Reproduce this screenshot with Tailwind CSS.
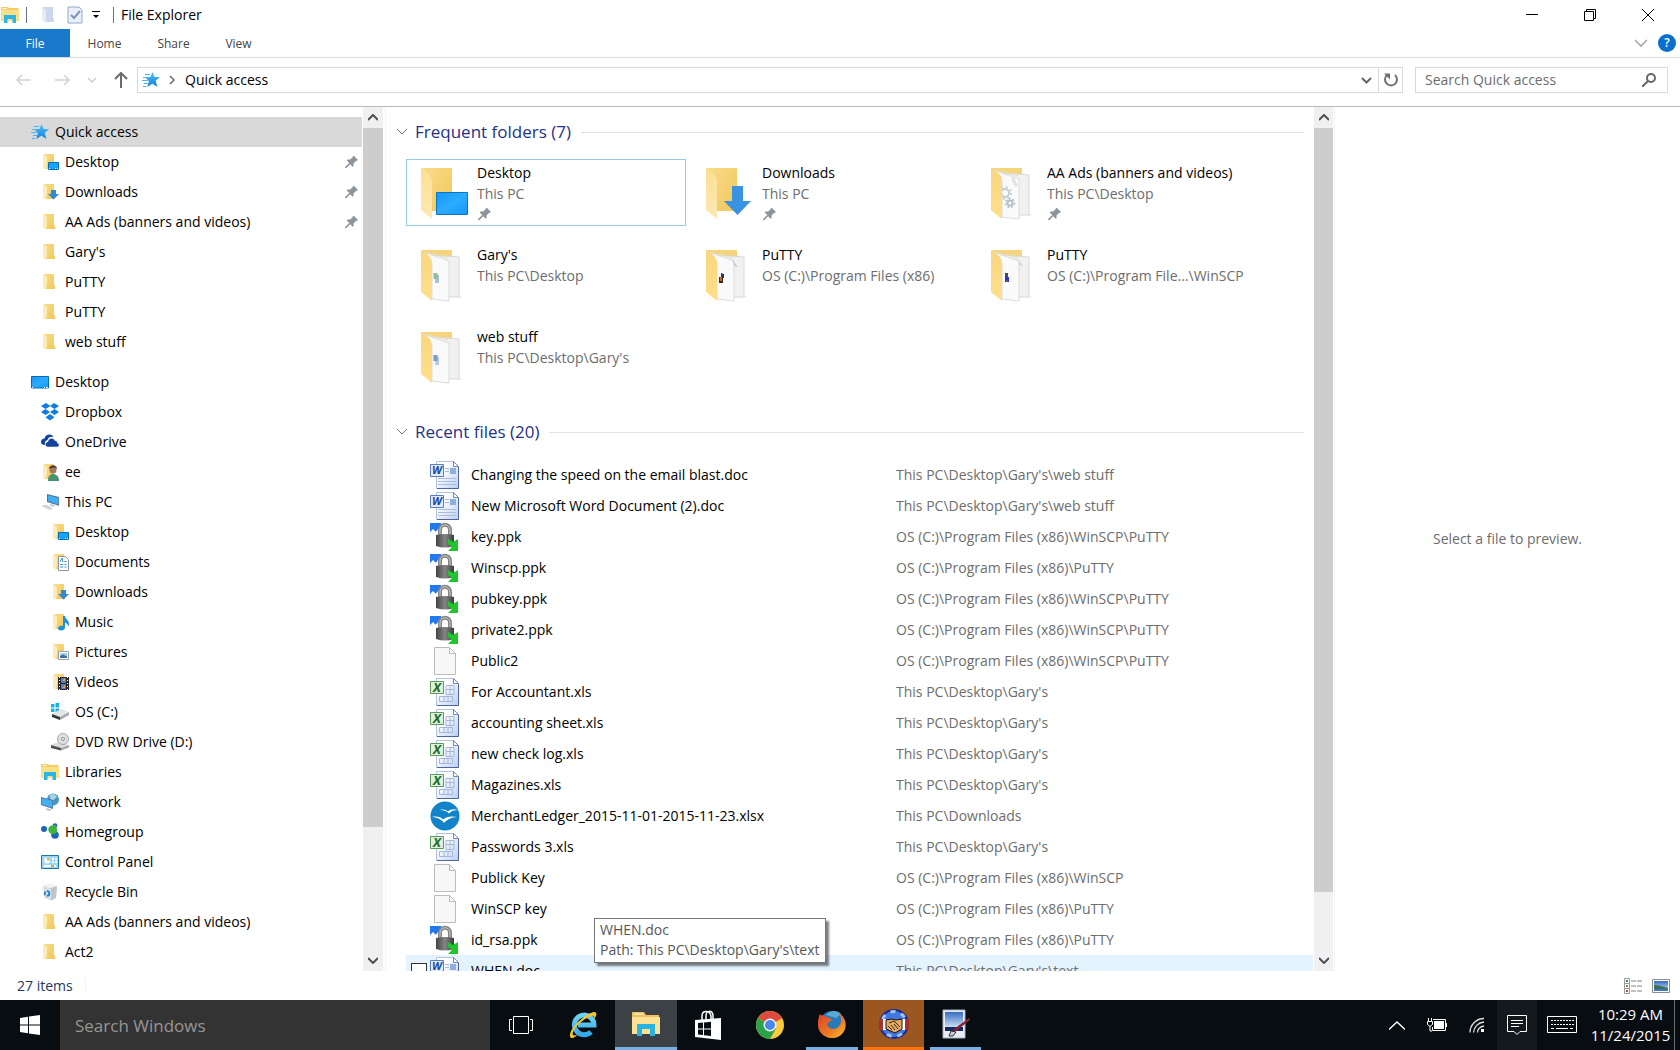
<!DOCTYPE html>
<html lang="en">

<head>
    <meta charset="UTF-8" />
    <meta name="viewport" content="width=device-width, initial-scale=1.0" />
    <title>File Explorer</title>
    <script src="https://cdn.jsdelivr.net/npm/@tailwindcss/browser@4"></script>
</head>

<body class="h-screen flex flex-col overflow-hidden bg-white text-black text-sm font-['Open_Sans','Noto_Sans',sans-serif]">

    <!-- Icon sprite -->
    <svg class="absolute" width="0" height="0" aria-hidden="true">
        <defs>
            <linearGradient id="gFolder" x1="0" y1="0" x2="1" y2="1"><stop offset="0" stop-color="#f9dc8a" /><stop offset="1" stop-color="#f0c75c" /></linearGradient>
            <linearGradient id="gFlap" x1="0" y1="0" x2="0" y2="1"><stop offset="0" stop-color="#fbdf93" /><stop offset="1" stop-color="#fee9b4" /></linearGradient>
            <linearGradient id="gFlapDeep" x1="0" y1="0" x2="0" y2="1"><stop offset="0" stop-color="#f9d67e" /><stop offset="1" stop-color="#ffdf8c" /></linearGradient>
            <linearGradient id="gScreen" x1="0" y1="0" x2="1" y2="1"><stop offset="0" stop-color="#1796f3" /><stop offset="0.5" stop-color="#2cabff" /><stop offset="1" stop-color="#1499fb" /></linearGradient>
            <linearGradient id="gStar" x1="0" y1="0" x2="0" y2="1"><stop offset="0" stop-color="#52c0fb" /><stop offset="1" stop-color="#1181d8" /></linearGradient>
            <linearGradient id="gDoc" x1="0" y1="0" x2="1" y2="1"><stop offset="0.3" stop-color="#fff" /><stop offset="1" stop-color="#bccdf0" /></linearGradient>
            <linearGradient id="gLock" x1="0" y1="0" x2="1" y2="0"><stop offset="0" stop-color="#444" /><stop offset="0.5" stop-color="#858585" /><stop offset="1" stop-color="#3c3c3c" /></linearGradient>
            <linearGradient id="gFox" x1="0" y1="0" x2="1" y2="1"><stop offset="0" stop-color="#d9402a" /><stop offset="0.6" stop-color="#ee7b22" /><stop offset="1" stop-color="#fbc436" /></linearGradient>
            <linearGradient id="gIE" x1="0" y1="0" x2="0" y2="1"><stop offset="0" stop-color="#6fd3f8" /><stop offset="1" stop-color="#35a9e8" /></linearGradient>
            <linearGradient id="gSky" x1="0" y1="0" x2="0" y2="1"><stop offset="0" stop-color="#356cc4" /><stop offset="1" stop-color="#d5e7f8" /></linearGradient>
        </defs>

        <symbol id="star" viewBox="0 0 18 18">
            <path d="M10.5 1l2 5 5.500.3-4.300 3.500 1.600 6-5-3-5 3.200 1.600-6L3 6.300l5.500-.3z" fill="url(#gStar)" />
            <path d="M3 3.500h5M1 6.500h4M0 9.500h6M2 12.500h4M1 15.500h3" stroke="#4eb4f3" />
        </symbol>
        <symbol id="folder" viewBox="0 0 18 18">
            <path d="M3 1h10v11l1 1v3H5z" fill="url(#gFolder)" />
            <path d="M2 1l4 3v7l-1 6-3-2z" fill="#fdebb8" />
        </symbol>
        <symbol id="folder-desktop" viewBox="0 0 18 18">
            <use href="#folder" />
            <path d="M7.5 9.5h10v7h-10z" fill="#18a3fb" stroke="#0a6ab3" />
            <path d="M8 15.500h1M14 15.500h1M16 15.500h1" stroke="#fff" />
        </symbol>
        <symbol id="folder-down" viewBox="0 0 18 18">
            <use href="#folder" />
            <path d="M10 7h5v4h3l-5.500 5.500L7 11h3z" fill="#3389d8" />
        </symbol>
        <symbol id="folder-docs" viewBox="0 0 18 18">
            <use href="#folder" />
            <path d="M7.5 3.5h7l3 3v11h-10z" fill="#fff" stroke="#8b959b" />
            <path d="M9 9l2-4 1 4M9 11.500h3M9 14h3M13.500 8.500h2M13.500 11.500h2M13.500 14h2" fill="none" stroke="#2f91c9" />
        </symbol>
        <symbol id="folder-music" viewBox="0 0 18 18">
            <use href="#folder" />
            <path d="M12 3h2c0 3 4 4 4 8 0 1-.5 2-1 2.500C17 11 15.500 10 14 9.500V14c0 2-1.500 3.500-4 3.500-2 0-3-1-3-2.200 0-2 2.500-3 5-2.300z" fill="#1b8fdb" />
        </symbol>
        <symbol id="folder-pics" viewBox="0 0 18 18">
            <use href="#folder" />
            <path d="M7.5 8.500h10v8h-10z" fill="#fff" stroke="#98a1a8" />
            <path d="M9 10h7v5H9z" fill="#a8cdea" />
            <path d="M9 13l3-1.500 4 2V15H9z" fill="#396f9e" />
        </symbol>
        <symbol id="folder-video" viewBox="0 0 18 18">
            <use href="#folder" />
            <path d="M7 4h11v13H7z" fill="#24282e" />
            <path d="M10 5h5v5h-5zM10 11h5v5h-5z" fill="#5578bf" />
            <path d="M11 8l3-3v3zM11 15l3-3v3z" fill="#d8ab49" />
            <path d="M8.500 4v13M16.500 4v13" stroke="#fff" stroke-dasharray="1 2" />
        </symbol>
        <symbol id="folder-user" viewBox="0 0 18 18">
            <use href="#folder" />
            <path d="M7 18c0-5 2-7 5-7s6 2 6 7z" fill="#489271" />
            <circle cx="12" cy="7" r="3.500" fill="#a57a59" />
            <path d="M8 6c0-5 8-5 8 0l-2-1.500-4 .5z" fill="#51392c" />
        </symbol>
        <symbol id="desktop" viewBox="0 0 18 18">
            <path d="M.5 3.500h17v11.500H.5z" fill="url(#gScreen)" stroke="#086ab3" />
            <path d="M1 14.500h1M13 14.500h1M15 14.500h2" stroke="#fff" />
        </symbol>
        <symbol id="dropbox" viewBox="0 0 18 18">
            <path d="M5 0l4.500 3L4.500 6 0 3zM13 0l5 3-4.500 3-4.500-3zM4.500 6L9 9l-4.500 3L0 9zM13.500 6L18 9l-4.500 3L9 9zM9 11l4.500 3.200L9 17.500l-4.500-3.300z" fill="#0e7ce0" />
        </symbol>
        <symbol id="onedrive" viewBox="0 0 18 18">
            <path d="M4 12c-2.500 0-4-1-4-3s1.500-3.500 3.500-3.500C4 3 6 1.500 8.500 1.500c2 0 3.500 1 4 2.500-3-.8-5.500.5-6 3C4 7.500 3.500 10 4 12z" fill="#14439c" />
            <path d="M7 14c-3.500 0-3.500-5 0-5.300.3-4 5.600-4.700 6.800-1.200 2-.3 2.700 1.200 2.500 2.500 2.500.3 2.200 4 0 4z" fill="#14439c" stroke="#fff" stroke-width=".5" />
        </symbol>
        <symbol id="pc" viewBox="0 0 18 18">
            <path d="M6 1l12.500 3v9L6 9z" fill="#5a7084" />
            <path d="M7 2.300L17.500 5v6.500L7 8.200z" fill="#43adf4" />
            <path d="M9 11l5 1-1 2-4-1z" fill="#c5cacd" />
            <path d="M0 13l5-1.500 7 4L9 17z" fill="#d0d4d7" />
        </symbol>
        <symbol id="drive" viewBox="0 0 18 18">
            <path d="M0 1h3.500v3.500H0zM4.500 0H8v4.500H4.500zM0 5.500h3.500V9H0zM4.500 5.500H8v4H4.500z" fill="#1db1de" />
            <path d="M1 11l9-5 8 3-9 5z" fill="#e3e5e6" />
            <path d="M1 11l8 3v3l-8-3z" fill="#35393b" />
            <path d="M9 14l9-5v3l-9 5z" fill="#a5a9ab" />
        </symbol>
        <symbol id="dvd" viewBox="0 0 18 18">
            <path d="M0 12l7-3 11 3-8 3z" fill="#dadcdd" />
            <path d="M0 12l10 3v2.500L0 15z" fill="#4b4e50" />
            <path d="M10 15l8-3v2.500l-8 3z" fill="#a5a8aa" />
            <circle cx="12" cy="6" r="5.500" fill="#dde0e3" stroke="#a6a9ab" />
            <circle cx="12" cy="6" r="1.500" fill="#fff" stroke="#8d9194" />
        </symbol>
        <symbol id="libraries" viewBox="0 0 18 18">
            <path d="M0 2V1h7l1 1h9.500v13H0z" fill="#f3cb61" />
            <path d="M0 4h18v11H0z" fill="#fddf86" />
            <path d="M1 2.500h5" stroke="#fff6d2" />
            <path d="M3 17V9h12v8h-3.500v-4h-5v4z" fill="#2ab8e2" />
        </symbol>
        <symbol id="network" viewBox="0 0 18 18">
            <circle cx="12" cy="6.500" r="6" fill="#4c93bd" />
            <path d="M9 2c2-2 6-1 7 2-2 1-3 4-5 3S8 4 9 2z" fill="#a6d3e8" />
            <path d="M0 4l12 3v9L0 12z" fill="#4b7ba0" />
            <path d="M.8 5l10.400 2.700v7L.8 11.300z" fill="#44aef2" />
            <path d="M5 15l6 1.500-2 1.500-4-1z" fill="#c0c7cc" />
        </symbol>
        <symbol id="homegroup" viewBox="0 0 18 18">
            <circle cx="3" cy="6" r="3" fill="#1b65b8" />
            <circle cx="14" cy="2.500" r="2.300" fill="#1b65b8" />
            <circle cx="14" cy="12" r="3.800" fill="#1b65b8" />
            <path d="M8 4c2-2 7-3 7-1 1 3 2 6 0 7-2 2-6 1-7-1s-1-3 0-5z" fill="#3fb53f" />
        </symbol>
        <symbol id="control" viewBox="0 0 18 18">
            <path d="M.5 2.500h17v13H.5z" fill="#9bd7f7" stroke="#2077ae" />
            <circle cx="6" cy="7.500" r="3" fill="#f7fcff" />
            <path d="M6 7.500V4.500a3 3 0 0 1 3 3z" fill="#ecb544" />
            <path d="M11 5h2v2h-2zM14 5h2v2h-2zM11 8h2v2h-2zM14 8h2v2h-2z" fill="#fff" />
            <path d="M3 13h12" stroke="#fff" stroke-width="2" />
            <path d="M10 13h3" stroke="#e9a12e" stroke-width="2" />
        </symbol>
        <symbol id="bin" viewBox="0 0 18 18">
            <path d="M2 3l6-2 8 2-1 12-5 2.500L3.500 15z" fill="#d9dee2" />
            <path d="M2 3l8 2 6-2-6-2z" fill="#f2f4f5" />
            <path d="M10 5l6-2-1 12-5 2.500z" fill="#bfc5ca" />
            <circle cx="6" cy="10.500" r="2.300" fill="none" stroke="#1d7ed0" stroke-width="1.800" stroke-dasharray="3.500 1.300" />
        </symbol>
        <symbol id="pin" viewBox="0 0 14 14">
            <path d="M9 1l4 4-.8.800-1-.1-2.700 2.700.1 2.500-.9.900-2.600-2.600L1.500 13 0 13.200l.3-1.500 4-3.800-2.600-2.500.9-1 2.500.200 2.800-2.700-.1-1z" fill="#8d959c" />
        </symbol>

        <!-- Tile icons -->
        <symbol id="big-folder" viewBox="0 0 48 52">
            <path d="M0 0h31v43H11z" fill="url(#gFolder)" />
            <path d="M0 0l8 6q3 3 3 8v37L0 42z" fill="url(#gFlap)" />
        </symbol>
        <symbol id="big-desktop" viewBox="0 0 48 52">
            <use href="#big-folder" />
            <path d="M15.500 24.500h31v22h-31z" fill="url(#gScreen)" stroke="#0c75c4" />
        </symbol>
        <symbol id="big-down" viewBox="0 0 48 52">
            <use href="#big-folder" />
            <path d="M26 18h11v15h8L31.500 47 18 33h8z" fill="#3a92e2" />
        </symbol>
        <symbol id="big-pages" viewBox="0 0 48 52">
            <path d="M0 0h31v7L11 9z" fill="#f6d47c" />
            <path d="M12 5l26 2v40H12z" fill="#f1f1f1" stroke="#d8d8d8" />
            <path d="M37 47l4-1-3 2z" fill="#ddd" />
            <path d="M5 3l23 8v40l-17-2V13z" fill="#fafafa" stroke="#dcdcdc" />
            <path d="M3 2l24 6" stroke="#e5dfc8" />
            <path d="M0 0l8 6q3 3 3 8v37L0 42z" fill="url(#gFlapDeep)" />
        </symbol>
        <symbol id="big-gears" viewBox="0 0 48 52">
            <use href="#big-pages" />
            <path d="M20 10l4 9 3-1-4-8z" fill="#e2e2dc" />
            <circle cx="14" cy="25" r="4" fill="none" stroke="#c3cdd5" stroke-width="2" />
            <circle cx="14" cy="25" r="6" fill="none" stroke="#c3cdd5" stroke-width="2" stroke-dasharray="2 2.700" />
            <circle cx="19" cy="35" r="2.500" fill="none" stroke="#b5c0cb" stroke-width="2" />
            <circle cx="19" cy="35" r="4.300" fill="none" stroke="#b5c0cb" stroke-width="2" stroke-dasharray="1.700 2" />
            <path d="M11 14v37L0 42V0l8 6q3 3 3 8z" fill="url(#gFlapDeep)" />
        </symbol>
        <symbol id="big-xls" viewBox="0 0 48 52">
            <use href="#big-pages" />
            <path d="M14 25h4v8h-4z" fill="#a8bfe0" />
            <path d="M12.500 23h4v6h-4z" fill="#8fbd94" />
        </symbol>
        <symbol id="big-doc" viewBox="0 0 48 52">
            <use href="#big-pages" />
            <path d="M14 25h4v8h-4z" fill="#b5c9e8" />
            <path d="M12.500 23h4v6h-4z" fill="#7c9ac9" />
        </symbol>
        <symbol id="big-putty" viewBox="0 0 48 52">
            <use href="#big-pages" />
            <path d="M26 9l6 8-4-1z" fill="#cfcfcf" />
            <path d="M15 23l3 1v4h-3z" fill="#2a2f8f" />
            <path d="M13 27h4v6h-4z" fill="#3a2a12" />
            <path d="M14 27h2v4h-2z" fill="#c1682a" />
        </symbol>
        <symbol id="big-putty2" viewBox="0 0 48 52">
            <use href="#big-pages" />
            <path d="M27 9l5 7-4-1z" fill="#d5d5d5" />
            <path d="M14 23h3v4h-3z" fill="#4a4a5a" />
            <path d="M14 27h4v5h-4z" fill="#2a35d0" />
            <path d="M15 30h2v2h-2z" fill="#5b5b5b" />
        </symbol>

        <!-- File icons, the letter on doc and xls is added per row -->
        <symbol id="doc" viewBox="0 0 30 30">
            <path d="M6.500 1.500h17l5 5v22h-22z" fill="url(#gDoc)" stroke="#b3c2e0" />
            <path d="M28.500 7v21.500H7" fill="none" stroke="#4c679d" />
            <path d="M23.500 1.500v5h5z" fill="#fff" stroke="#7287b3" />
            <path d="M15 8.500h4M15 11.500h4M8 18.500h18M8 21.500h18M8 24.500h18" stroke="#a9bbdf" />
            <path d="M20 8h6v6h-6z" fill="#8faee0" />
            <path d="M.5 4.500h13v12H.5z" fill="#e3ebfa" stroke="#5b7dbf" />
        </symbol>
        <symbol id="xls" viewBox="0 0 30 30">
            <path d="M6.500 1.500h17l5 5v22h-22z" fill="url(#gDoc)" stroke="#b3c2e0" />
            <path d="M28.500 7v21.500H7" fill="none" stroke="#4c679d" />
            <path d="M23.500 1.500v5h5z" fill="#fff" stroke="#7287b3" />
            <path d="M16 8.500h8v9h-8zM20 8v10M16 12.500h8M9.500 19.500h13v5h-13zM14 20v5M18 20v5" fill="none" stroke="#a3b7dd" />
            <path d="M.5 4.500h13v12H.5z" fill="#dff0dc" stroke="#5a9a5c" />
        </symbol>
        <symbol id="ppk" viewBox="0 0 30 30">
            <path d="M0 1h11v4L8 7l-4 5-4-2z" fill="#2179f0" />
            <path d="M0 10l3-3 4 4-2 2z" fill="#fff" />
            <path d="M10 15V8c0-7 10-7 10 0v7" fill="none" stroke="#858585" stroke-width="4" />
            <path d="M10 15V8c0-7 10-7 10 0v7" fill="none" stroke="#c9c9c9" />
            <path d="M6 13q9-2 18 0v11q-9 3-18 0z" fill="url(#gLock)" />
            <path d="M18 17l5 3 5-3v12H18l4-4-4-3z" fill="#1fc62b" />
        </symbol>
        <symbol id="blank" viewBox="0 0 30 30">
            <path d="M4.500 1.500h15l6 6v21h-21z" fill="#f7f7f7" stroke="#bcbcbc" />
            <path d="M19.500 1.500v6h6z" fill="#fff" stroke="#bcbcbc" />
        </symbol>
        <symbol id="office" viewBox="0 0 30 30">
            <circle cx="15" cy="15" r="14.500" fill="#1283c9" />
            <path d="M10 9c4-1 6 0 8 1.500 2-2 6-3 10-1.500-4 0-7 1-9 3.500-2-2-5-3.500-9-3.500zM2 16c5-1 9 0 11 2.500 3-2.500 8-4 14-2.500-6 .5-9 2-13 6-2-3-6-5.500-12-6z" fill="#fff" />
        </symbol>
    </svg>

    <!-- Title bar -->
    <header class="h-[29px] shrink-0 flex items-center">
        <svg class="size-[18px] ml-px" aria-hidden="true"><use href="#libraries" /></svg>
        <span class="w-px h-4 bg-gray-500 ml-[7px]"></span>
        <svg class="size-[18px] ml-[13px]" viewBox="0 0 18 18" aria-hidden="true">
            <path d="M3 1h10v11l1 1v3H5z" fill="#ccd8ea" />
            <path d="M2 1l4 3v13l-4-3z" fill="#e3ebf5" />
        </svg>
        <svg class="size-[18px] ml-2" viewBox="0 0 18 18" aria-hidden="true">
            <path d="M2 1h11l3 3v13H2z" fill="#e9f0fa" stroke="#94a6c6" />
            <path d="M5 9l3 3 6-7" fill="none" stroke="#8093b8" stroke-width="2" />
        </svg>
        <button class="w-6 h-5 flex items-center justify-center" aria-label="Customize Quick Access Toolbar">
            <svg class="size-2" viewBox="0 0 8 8"><path d="M0 0h8v1H0zM1 4h6L4 7z" /></svg>
        </button>
        <span class="w-px h-4 bg-gray-500 ml-[5px]"></span>
        <h1 class="ml-[7px]">File Explorer</h1>
        <div class="ml-auto mr-[3px] flex h-full">
            <button class="w-[58px] flex items-center justify-center" aria-label="Minimize">
                <svg class="size-3" viewBox="0 0 12 12"><path d="M0 5.500h12" stroke="#000" /></svg>
            </button>
            <button class="w-[58px] flex items-center justify-center" aria-label="Restore">
                <svg class="size-3" viewBox="0 0 12 12"><path d="M.5 2.500h9v9h-9zM2.500 2V.5h9v9H10" fill="none" stroke="#000" /></svg>
            </button>
            <button class="w-[58px] flex items-center justify-center" aria-label="Close">
                <svg class="size-3" viewBox="0 0 12 12"><path d="M0 0l12 12M12 0L0 12" stroke="#000" /></svg>
            </button>
        </div>
    </header>

    <!-- Ribbon tabs -->
    <nav class="h-[29px] shrink-0 flex items-stretch border-b border-[#dadbdc] text-xs text-[#444]">
        <button class="w-[70px] pt-[2px] bg-[#1979ca] text-white">File</button>
        <button class="w-[69px] pt-[2px]">Home</button>
        <button class="w-[69px] pt-[2px]">Share</button>
        <button class="w-[61px] pt-[2px]">View</button>
        <div class="ml-auto mr-1 flex items-center gap-[11px]">
            <button aria-label="Expand the Ribbon">
                <svg class="w-3 h-2" viewBox="0 0 12 8"><path d="M0 1l6 6 6-6" fill="none" stroke="#a0a0a0" stroke-width="1.500" /></svg>
            </button>
            <button class="size-[18px] rounded-full bg-[#0b6fcd] text-white font-semibold leading-[18px]" aria-label="Help">?</button>
        </div>
    </nav>

    <!-- Address row -->
    <div class="h-[49px] shrink-0 flex items-center pl-4 pr-3 pb-1 border-b border-[#b9b9b9]">
        <button aria-label="Back">
            <svg class="w-[15px] h-3" viewBox="0 0 15 12"><path d="M15 6H1M6 1L1 6l5 5" fill="none" stroke="#d2d2d2" stroke-width="1.500" /></svg>
        </button>
        <button class="ml-6" aria-label="Forward">
            <svg class="w-[15px] h-3" viewBox="0 0 15 12"><path d="M0 6h14M9 1l5 5-5 5" fill="none" stroke="#d2d2d2" stroke-width="1.500" /></svg>
        </button>
        <button class="ml-[18px]" aria-label="Recent locations">
            <svg class="w-2 h-[6px]" viewBox="0 0 8 6"><path d="M0 1l4 4 4-4" fill="none" stroke="#ccc" stroke-width="1.500" /></svg>
        </button>
        <button class="ml-[18px]" aria-label="Up">
            <svg class="w-[14px] h-4" viewBox="0 0 14 16"><path d="M7 16V1M1 7l6-6 6 6" fill="none" stroke="#6a6a6a" stroke-width="2" /></svg>
        </button>
        <div class="flex-1 h-[26px] ml-[9px] flex items-center border border-[#d9d9d9]">
            <svg class="size-[18px] ml-1" aria-hidden="true"><use href="#star" /></svg>
            <svg class="w-[6px] h-[10px] ml-[9px]" viewBox="0 0 6 10" aria-hidden="true"><path d="M1 1l4 4-4 4" fill="none" stroke="#666" stroke-width="1.500" /></svg>
            <a href="#" class="ml-[10px]">Quick access</a>
            <button class="ml-auto w-6 h-full flex items-center justify-center" aria-label="Previous locations">
                <svg class="w-[11px] h-[7px]" viewBox="0 0 11 7"><path d="M1 1l4.500 4.500L10 1" fill="none" stroke="#666" stroke-width="2" /></svg>
            </button>
            <button class="w-6 h-full flex items-center justify-center border-l border-[#d9d9d9]" aria-label="Refresh">
                <svg class="size-4" viewBox="0 0 16 16"><path d="M12 3a6 6 0 1 1-8 0" fill="none" stroke="#6f6f6f" stroke-width="2" /><path d="M1 1.500h6v6z" fill="#6f6f6f" /></svg>
            </button>
        </div>
        <label class="w-[253px] h-[26px] ml-3 flex items-center border border-[#d9d9d9] pl-[9px] pr-[11px]">
            <input type="text" placeholder="Search Quick access" aria-label="Search Quick access" class="flex-1 min-w-0 outline-none placeholder:text-[#6d6d6d]" />
            <svg class="size-[14px]" viewBox="0 0 14 14" aria-hidden="true"><circle cx="9" cy="5" r="4" fill="none" stroke="#666" stroke-width="2" /><path d="M6 8l-6 6" stroke="#666" stroke-width="2" /></svg>
        </label>
    </div>

    <div class="flex-1 min-h-0 flex">
        <!-- Navigation pane -->
        <aside class="w-[386px] shrink-0 flex border-r border-[#f3f3f3]">
            <nav id="tree" class="flex-1 pt-[10px] mr-px overflow-hidden"></nav>
            <div class="w-5 mr-[2px] flex flex-col bg-[#f0f0f0]">
                <button class="h-[21px] flex items-center justify-center" aria-label="Scroll up">
                    <svg class="w-[10px] h-[7px]" viewBox="0 0 10 7"><path d="M0 6l5-5 5 5" fill="none" stroke="#505050" stroke-width="2" /></svg>
                </button>
                <div class="flex-1"><div class="h-[85%] bg-[#cdcdcd]"></div></div>
                <button class="h-[21px] flex items-center justify-center" aria-label="Scroll down">
                    <svg class="w-[10px] h-[7px]" viewBox="0 0 10 7"><path d="M0 1l5 5 5-5" fill="none" stroke="#505050" stroke-width="2" /></svg>
                </button>
            </div>
        </aside>

        <!-- File list -->
        <main class="relative flex-1 min-w-0 flex">
            <div class="flex-1 min-w-0 pt-[10px] pl-[11px] overflow-hidden">
                <section>
                    <h2 class="h-[30px] mr-[9px] flex items-center text-[17px] text-[#1e3287]">
                        <svg class="w-[10px] h-[6px] mr-2" viewBox="0 0 10 6" aria-hidden="true"><path d="M0 0l5 5 5-5" fill="none" stroke="#777" /></svg>
                        Frequent folders (7)
                        <span class="flex-1 h-px ml-[10px] bg-[#e2e2e2]"></span>
                    </h2>
                    <div id="folders" class="mt-3 ml-[9px] flex flex-wrap gap-x-[5px] gap-y-[15px]"></div>
                </section>
                <section class="mt-[27px]">
                    <h2 class="h-[30px] mr-[9px] flex items-center text-[17px] text-[#1e3287]">
                        <svg class="w-[10px] h-[6px] mr-2" viewBox="0 0 10 6" aria-hidden="true"><path d="M0 0l5 5 5-5" fill="none" stroke="#777" /></svg>
                        Recent files (20)
                        <span class="flex-1 h-px ml-[10px] bg-[#e2e2e2]"></span>
                    </h2>
                    <div class="mt-3 ml-[9px]">
                        <table class="w-full table-fixed border-collapse">
                            <colgroup><col class="w-6" /><col class="w-[41px]" /><col class="w-[425px]" /><col /></colgroup>
                            <tbody id="files"></tbody>
                        </table>
                    </div>
                </section>
            </div>
            <div class="w-[19px] ml-px mr-[1px] flex flex-col bg-[#f0f0f0]">
                <button class="h-[21px] flex items-center justify-center" aria-label="Scroll up">
                    <svg class="w-[10px] h-[7px]" viewBox="0 0 10 7"><path d="M0 6l5-5 5 5" fill="none" stroke="#505050" stroke-width="2" /></svg>
                </button>
                <div class="flex-1"><div class="h-[93%] bg-[#cdcdcd]"></div></div>
                <button class="h-[21px] flex items-center justify-center" aria-label="Scroll down">
                    <svg class="w-[10px] h-[7px]" viewBox="0 0 10 7"><path d="M0 1l5 5 5-5" fill="none" stroke="#505050" stroke-width="2" /></svg>
                </button>
            </div>
            <div role="tooltip" class="absolute left-[208px] bottom-2 px-[5px] pt-px pb-[2px] border border-[#767676] bg-white text-[#575757] leading-5 whitespace-nowrap shadow-[3px_3px_2px_#00000080]">
                WHEN.doc<br />Path: This PC\Desktop\Gary's\text
            </div>
        </main>

        <!-- Preview pane -->
        <section class="w-[346px] shrink-0 flex items-center justify-center border-l border-[#f3f3f3] text-[#6d6d6d]">
            <p>Select a file to preview.</p>
        </section>
    </div>

    <!-- Status bar -->
    <footer class="h-[29px] shrink-0 flex items-center pl-[17px] pr-[10px] text-[#1e395b]">
        <span>27 items</span>
        <span class="w-px h-4 ml-3 bg-gray-100"></span>
        <button class="ml-auto" aria-label="Details view">
            <svg class="w-[19px] h-4" viewBox="0 0 19 16">
                <path d="M.5.500h5v5h-5zM.5 5.500h5v5h-5zM.5 10.500h5v5h-5z" fill="#fff" stroke="#999" />
                <path d="M2 2h2v2H2z" fill="#3477b6" /><path d="M2 7h2v2H2z" fill="#7a8b55" /><path d="M2 12h2v2H2z" fill="#b04b2c" />
                <path d="M7 3h5M13 3h5M7 8h5M13 8h5M7 13h5M13 13h5" stroke="#808080" />
            </svg>
        </button>
        <button class="ml-[9px]" aria-label="Large icons view">
            <svg class="w-[18px] h-[14px]" viewBox="0 0 18 14">
                <path d="M.5.500h17v13H.5z" fill="#fff" stroke="#8c8c8c" />
                <path d="M2 2h14v10H2z" fill="url(#gSky)" />
                <path d="M2 6c4 0 8 1 14 3v1H2z" fill="#3d7157" /><path d="M2 10h14v2H2z" fill="#3f78bd" />
            </svg>
        </button>
    </footer>

    <!-- Taskbar -->
    <div class="h-[50px] shrink-0 flex bg-[#070d11] text-white">
        <button class="w-[60px] flex items-center justify-center" aria-label="Start">
            <svg class="size-5" viewBox="0 0 20 20"><path d="M0 3l8-1.200V9.500H0zM9 1.600L20 0v9.500H9zM0 10.500h8v7.700L0 17zM9 10.500h11V20L9 18.400z" fill="#fff" /></svg>
        </button>
        <input type="text" placeholder="Search Windows" aria-label="Search Windows" class="w-[430px] bg-[#333] px-[15px] pt-[2px] text-[17px] outline-none placeholder:text-[#969696]" />
        <button class="w-[61px] flex items-center justify-center" aria-label="Task View">
            <svg class="w-6 h-[18px]" viewBox="0 0 24 18"><path d="M4.500.5h15v17h-15zM3 3.500H.5v11H3M21 3.500h2.500v11H21" fill="none" stroke="#fff" /></svg>
        </button>
        <button class="w-16 flex items-center justify-center" aria-label="Internet Explorer">
            <svg class="size-7" viewBox="0 0 28 28">
                <path d="M22 21a9.800 9.800 0 1 1 3-7H9" fill="none" stroke="url(#gIE)" stroke-width="5" />
                <path d="M4 27C-1 28 0 20 8 12S26-1 27 2c1 1 0 4-2 6 1-4-2-4-7-1C10 11 2 21 4 24c1 1 3 0 5-1-2 2-3 3-5 4z" fill="#f4c531" />
            </svg>
        </button>
        <button class="w-[62px] flex items-center justify-center bg-[#3b4144] border-b-3 border-[#76b0e4]" aria-label="File Explorer">
            <svg class="w-7 h-6" viewBox="0 0 28 24">
                <path d="M0 0h12l2 3h13v18H0z" fill="#eec15c" /><path d="M0 5h28v17H0z" fill="#fde196" />
                <path d="M2 2h9" stroke="#fff" /><path d="M5 24V12h18v12h-5v-7h-8v7z" fill="#28b3e3" />
            </svg>
        </button>
        <button class="w-[62px] flex items-center justify-center" aria-label="Store">
            <svg class="w-[26px] h-[30px]" viewBox="0 0 26 30">
                <path d="M7 11V6c0-6 8-6 9 0v3M11 10V6c0-6 6-6 7-1v4" fill="none" stroke="#fff" stroke-width="1.500" />
                <path d="M0 10l26-2v22L0 27z" fill="#fff" />
                <path d="M3 13l5-.5v6H3zM9 12.400l7-.7v6.800H9zM3 19.500h5v5.500l-5-.5zM9 19.500h7v6.500l-7-.8z" fill="#070d11" />
            </svg>
        </button>
        <button class="w-[62px] flex items-center justify-center" aria-label="Chrome">
            <svg class="size-7" viewBox="0 0 28 28">
                <circle cx="14" cy="14" r="14" fill="#fbcb3e" />
                <path d="M14 14L1.900 7A14 14 0 0 1 26.100 7z" fill="#dd4b3e" />
                <path d="M1.900 7a14 14 0 0 0 12.100 21l6-10.500-6-3.500z" fill="#2ba24c" />
                <path d="M14 7h12.100L14 14z" fill="#dd4b3e" />
                <circle cx="14" cy="14" r="6.500" fill="#f4f4f4" /><circle cx="14" cy="14" r="5" fill="#4687f1" />
            </svg>
        </button>
        <button class="w-[62px] px-[5px]" aria-label="Firefox">
            <span class="h-full flex items-center justify-center border-b-3 border-[#76b0e4]">
                <svg class="size-7" viewBox="0 0 28 28">
                    <circle cx="14" cy="13" r="12" fill="#2a79b9" />
                    <path d="M8 5c4-5 12-5 15-1l-5 4z" fill="#58aad8" />
                    <path d="M2 4c1 2 4 1 6 3 3 0 5 2 6 4-3 0-4 1-5 3 1 5 6 6 10 4 5-3 5-10 2-15 8 5 9 16 2 22S5 28 1 20C-1 14 0 8 2 4z" fill="url(#gFox)" />
                </svg>
            </span>
        </button>
        <button class="w-[61px] mr-px flex items-center justify-center bg-[#9c561f] border-b-3 border-[#fd7208]" aria-label="Handshake">
            <svg class="size-[30px]" viewBox="0 0 30 30">
                <circle cx="15" cy="15" r="14" fill="#4078e0" stroke="#182a90" stroke-width="2" />
                <circle cx="15" cy="15" r="12.500" fill="none" stroke="#9fc6f4" stroke-width="3" stroke-dasharray="5 6" />
                <path d="M0 10h5v11H0zM25 10h5v11h-5z" fill="#a3342c" />
                <path d="M4 10h3v11H4zM23 10h3v11h-3z" fill="#fff" />
                <path d="M7 11l6-1 4 1 6-1v10l-7 4-9-4z" fill="#e2ab61" stroke="#15120e" />
                <path d="M10 14l5-2 6 6M9 17l4 4M12 16l4 5M15 15l4 5" fill="none" stroke="#3b2711" />
            </svg>
        </button>
        <button class="w-[61px] px-[5px]" aria-label="Photo Editor">
            <span class="h-full flex items-center justify-center border-b-3 border-[#76b0e4]">
                <svg class="w-7 h-[30px]" viewBox="0 0 28 30">
                    <path d="M1 1h22v28H1z" fill="#e8edf5" stroke="#aab4c5" />
                    <path d="M3 3h18v16H3z" fill="url(#gSky)" /><path d="M3 18h18v4H3z" fill="#16295c" />
                    <path d="M8 25l4-5L27 9l1 2-14 11z" fill="#8a2235" /><path d="M7 27l2-5 5 1-3 4z" fill="#d0d0d0" stroke="#333" />
                </svg>
            </span>
        </button>
        <div class="ml-auto flex">
            <button class="w-10 flex items-center justify-center" aria-label="Show hidden icons">
                <svg class="w-4 h-[9px]" viewBox="0 0 16 9"><path d="M0 8.500L8 1l8 7.500" fill="none" stroke="#fff" stroke-width="1.300" /></svg>
            </button>
            <button class="w-10 flex items-center justify-center" aria-label="Battery">
                <svg class="w-5 h-[14px]" viewBox="0 0 20 14"><path d="M6 1.500h12.500v11H5.500V9M1 3.500h4M1.500 0v3M4.500 0v3M.5 3.500h5v3l-2 1.500h-1l-2-1.500zM3 8v5h2" fill="none" stroke="#fff" /><path d="M7 3h10v8H7zM19 5h1v4h-1z" fill="#fff" /></svg>
            </button>
            <button class="w-10 flex items-center justify-center" aria-label="Network">
                <svg class="size-4" viewBox="0 0 16 16"><path d="M1 15.500C1 8 7 1.500 15 1.500M4.500 15.500C5 10 9 5.500 15 5M8.500 15.500c0-3 2.500-6 6.500-6.500" fill="none" stroke="#ddd" stroke-width="1.300" /><path d="M12 12h3v3h-3z" fill="#fff" /></svg>
            </button>
            <button class="w-10 flex items-center justify-center bg-[#14191d]" aria-label="Notifications">
                <svg class="size-5" viewBox="0 0 20 20"><path d="M.5.500h19v16H13l-3 3-3-3H.5zM4 5.500h12M4 8.500h12M4 11.500h8" fill="none" stroke="#fff" /></svg>
            </button>
            <button class="w-[50px] flex items-center justify-center" aria-label="Touch keyboard">
                <svg class="w-[30px] h-[18px]" viewBox="0 0 30 18"><path d="M.5.500h29v16H.5z" fill="none" stroke="#fff" /><path d="M4 4.500h23M4 8.500h23" stroke="#fff" stroke-dasharray="2 1" /><path d="M4 12.500h3M9 12.500h12M23 12.500h3" stroke="#fff" /></svg>
            </button>
            <button class="w-[87px] text-center text-[15px] leading-[21px]">10:29 AM<br />11/24/2015</button>
            <button class="w-[6px] border-l border-[#6b6e70]" aria-label="Show desktop"></button>
        </div>
    </div>

    <script>
        // indent, icon, label, pinned
        const tree = [
            ['pl-[31px]', 'star', 'Quick access'],
            ['pl-[41px]', 'folder-desktop', 'Desktop', true],
            ['pl-[41px]', 'folder-down', 'Downloads', true],
            ['pl-[41px]', 'folder', 'AA Ads (banners and videos)', true],
            ['pl-[41px]', 'folder', "Gary's"],
            ['pl-[41px]', 'folder', 'PuTTY'],
            ['pl-[41px]', 'folder', 'PuTTY'],
            ['pl-[41px]', 'folder', 'web stuff'],
            ['pl-[31px] mt-[10px]', 'desktop', 'Desktop'],
            ['pl-[41px]', 'dropbox', 'Dropbox'],
            ['pl-[41px]', 'onedrive', 'OneDrive'],
            ['pl-[41px]', 'folder-user', 'ee'],
            ['pl-[41px]', 'pc', 'This PC'],
            ['pl-[51px]', 'folder-desktop', 'Desktop'],
            ['pl-[51px]', 'folder-docs', 'Documents'],
            ['pl-[51px]', 'folder-down', 'Downloads'],
            ['pl-[51px]', 'folder-music', 'Music'],
            ['pl-[51px]', 'folder-pics', 'Pictures'],
            ['pl-[51px]', 'folder-video', 'Videos'],
            ['pl-[51px]', 'drive', 'OS (C:)'],
            ['pl-[51px]', 'dvd', 'DVD RW Drive (D:)'],
            ['pl-[41px]', 'libraries', 'Libraries'],
            ['pl-[41px]', 'network', 'Network'],
            ['pl-[41px]', 'homegroup', 'Homegroup'],
            ['pl-[41px]', 'control', 'Control Panel'],
            ['pl-[41px]', 'bin', 'Recycle Bin'],
            ['pl-[41px]', 'folder', 'AA Ads (banners and videos)'],
            ['pl-[41px]', 'folder', 'Act2'],
        ];

        const pin = '<svg class="size-[14px]" aria-label="Pinned"><use href="#pin" /></svg>';

        document.getElementById('tree').innerHTML = tree.map(([indent, icon, label, pinned], i) => `
            <a href="#" class="h-[30px] flex items-center gap-[6px] pr-[3px] ${indent} ${i === 0 ? 'bg-[#d9d9d9]' : ''}">
                <svg class="size-[18px]" aria-hidden="true"><use href="#${icon}" /></svg>
                <span class="flex-1">${label}</span>
                ${pinned ? pin : ''}
            </a>`).join('');

        const folders = [
            ['big-desktop', 'Desktop', 'This PC', true],
            ['big-down', 'Downloads', 'This PC', true],
            ['big-gears', 'AA Ads (banners and videos)', 'This PC\\Desktop', true],
            ['big-xls', "Gary's", 'This PC\\Desktop'],
            ['big-putty', 'PuTTY', 'OS (C:)\\Program Files (x86)'],
            ['big-putty2', 'PuTTY', 'OS (C:)\\Program File...\\WinSCP'],
            ['big-doc', 'web stuff', "This PC\\Desktop\\Gary's"],
        ];

        document.getElementById('folders').innerHTML = folders.map(([icon, name, path, pinned], i) => `
            <a href="#" class="w-[280px] h-[67px] flex pl-[14px] border ${i === 0 ? 'border-[#99cce8]' : 'border-transparent'}">
                <svg class="w-12 h-[52px] mt-2" aria-hidden="true"><use href="#${icon}" /></svg>
                <span class="pl-2 pt-[2px] leading-[21px] whitespace-nowrap">
                    <span class="block">${name}</span>
                    <span class="block text-[#6d6d6d]">${path}</span>
                    <span class="block pt-[3px] pl-px">${pinned ? pin : ''}</span>
                </span>
            </a>`).join('');

        const webStuff = "This PC\\Desktop\\Gary's\\web stuff";
        const garys = "This PC\\Desktop\\Gary's";
        const pf = 'OS (C:)\\Program Files (x86)\\';
        const files = [
            ['doc', 'Changing the speed on the email blast.doc', webStuff],
            ['doc', 'New Microsoft Word Document (2).doc', webStuff],
            ['ppk', 'key.ppk', pf + 'WinSCP\\PuTTY'],
            ['ppk', 'Winscp.ppk', pf + 'PuTTY'],
            ['ppk', 'pubkey.ppk', pf + 'WinSCP\\PuTTY'],
            ['ppk', 'private2.ppk', pf + 'WinSCP\\PuTTY'],
            ['blank', 'Public2', pf + 'WinSCP\\PuTTY'],
            ['xls', 'For Accountant.xls', garys],
            ['xls', 'accounting sheet.xls', garys],
            ['xls', 'new check log.xls', garys],
            ['xls', 'Magazines.xls', garys],
            ['office', 'MerchantLedger_2015-11-01-2015-11-23.xlsx', 'This PC\\Downloads'],
            ['xls', 'Passwords 3.xls', garys],
            ['blank', 'Publick Key', pf + 'WinSCP'],
            ['blank', 'WinSCP key', pf + 'PuTTY'],
            ['ppk', 'id_rsa.ppk', pf + 'PuTTY'],
            ['doc', 'WHEN.doc', garys + '\\text', true],
        ];

        const letters = {
            doc: '<text x="7" y="14" text-anchor="middle" class="font-[\'Liberation_Sans\'] text-[11px] font-bold italic fill-[#24499a]">W</text>',
            xls: '<text x="7" y="15" text-anchor="middle" class="font-[\'Liberation_Sans\'] text-[13px] font-bold italic fill-[#226b2b]">X</text>',
        };

        document.getElementById('files').innerHTML = files.map(([icon, name, path, hover]) => `
            <tr class="h-[31px] ${hover ? 'bg-[#e5f3ff]' : ''}">
                <td class="p-0 pl-[5px]">${hover ? `<input type="checkbox" aria-label="Select ${name}" class="block size-4 appearance-none border border-[#333] bg-white" />` : ''}</td>
                <td class="p-0"><svg class="size-[30px]" viewBox="0 0 30 30" aria-hidden="true"><use href="#${icon}" />${letters[icon] || ''}</svg></td>
                <td class="p-0">${name}</td>
                <td class="p-0 text-[#6d6d6d]">${path}</td>
            </tr>`).join('');
    </script>
</body>

</html>
